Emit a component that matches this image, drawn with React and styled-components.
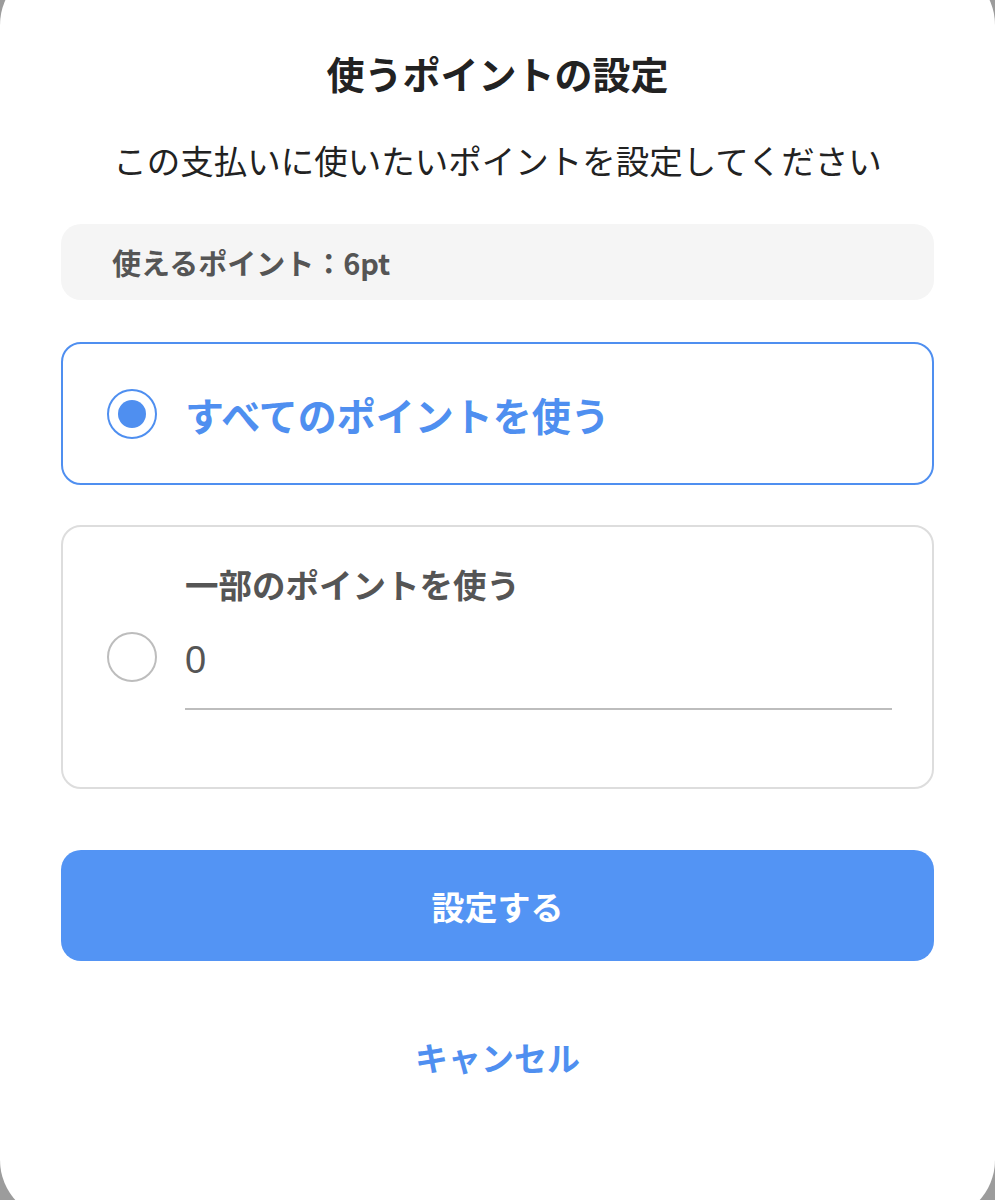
import React from "react";
import styled, { createGlobalStyle } from "styled-components";

const Global = createGlobalStyle`
  html, body { margin: 0; padding: 0; }
  body {
    background: #9c9c9c;
    overflow: hidden;
    font-family: "Noto Sans CJK JP", "Noto Sans", sans-serif;
  }
`;

const BLUE = "#4f8ff0";

const Modal = styled.div`
  margin-top: -35px;
  height: 1255px;
  background: #ffffff;
  border-radius: 60px;
  padding: 83px 61px 0;
  box-sizing: border-box;
  display: flex;
  flex-direction: column;
`;

const Title = styled.h1`
  margin: 0;
  font-size: 38px;
  line-height: 50px;
  font-weight: 700;
  color: #222;
  text-align: center;
`;

const Lead = styled.p`
  margin: 40px 0 0;
  font-size: 33.5px;
  line-height: 44px;
  font-weight: 400;
  color: #222;
  text-align: center;
  white-space: nowrap;
`;

const InfoBox = styled.div`
  margin-top: 42px;
  height: 76px;
  background: #f5f5f5;
  border-radius: 20px;
  display: flex;
  align-items: center;
  padding: 0 51px;
  font-size: 29px;
  font-weight: 700;
  color: #555;
`;

const OptionCard = styled.label`
  margin-top: ${(p) => p.$gap}px;
  min-height: ${(p) => p.$height}px;
  box-sizing: border-box;
  border: 2px solid ${(p) => (p.$active ? BLUE : "#dddddd")};
  border-radius: 20px;
  display: flex;
  align-items: center;
  padding: 0 40px 0 44px;
  gap: 28px;
  cursor: pointer;
`;

const Radio = styled.span`
  flex: none;
  width: 50px;
  height: 50px;
  box-sizing: border-box;
  border-radius: 50%;
  border: 2.5px solid ${(p) => (p.$checked ? BLUE : "#bdbdbd")};
  display: flex;
  align-items: center;
  justify-content: center;
  &::after {
    content: "";
    width: 28px;
    height: 28px;
    border-radius: 50%;
    background: ${(p) => (p.$checked ? BLUE : "transparent")};
  }
`;

const OptionText = styled.span`
  font-size: 39px;
  line-height: 50px;
  font-weight: 700;
  color: ${(p) => (p.$active ? BLUE : "#555")};
`;

const Column = styled.div`
  flex: 1;
  display: flex;
  flex-direction: column;
  padding-bottom: 42px;
`;

const SubLabel = styled.span`
  font-size: 33.5px;
  line-height: 44px;
  font-weight: 700;
  color: #555;
`;

const AmountInput = styled.input`
  border: none;
  border-bottom: 2px solid #bdbdbd;
  outline: none;
  background: transparent;
  padding: 30px 0 24px;
  height: 48px;
  box-sizing: content-box;
  font-family: "Liberation Sans", "Noto Sans", sans-serif;
  font-size: 38px;
  line-height: 48px;
  color: #555;
  width: 100%;
`;

const PrimaryButton = styled.button`
  margin-top: 61px;
  height: 111px;
  border: none;
  border-radius: 20px;
  background: #5394f4;
  color: #fff;
  font-family: inherit;
  font-size: 33px;
  font-weight: 700;
  cursor: pointer;
`;

const TextButton = styled.button`
  margin-top: 74px;
  align-self: center;
  border: none;
  background: transparent;
  color: ${BLUE};
  font-family: inherit;
  font-size: 33px;
  line-height: 44px;
  font-weight: 700;
  padding: 0;
  cursor: pointer;
`;

export default function App() {
  return (
    <>
      <Global />
      <Modal>
        <Title>使うポイントの設定</Title>
        <Lead>この支払いに使いたいポイントを設定してください</Lead>
        <InfoBox>使えるポイント：6pt</InfoBox>
        <OptionCard $gap={42} $height={143} $active>
          <Radio $checked />
          <OptionText $active>すべてのポイントを使う</OptionText>
        </OptionCard>
        <OptionCard $gap={40} $height={264}>
          <Radio />
          <Column>
            <SubLabel>一部のポイントを使う</SubLabel>
            <AmountInput defaultValue="0" readOnly />
          </Column>
        </OptionCard>
        <PrimaryButton>設定する</PrimaryButton>
        <TextButton>キャンセル</TextButton>
      </Modal>
    </>
  );
}
